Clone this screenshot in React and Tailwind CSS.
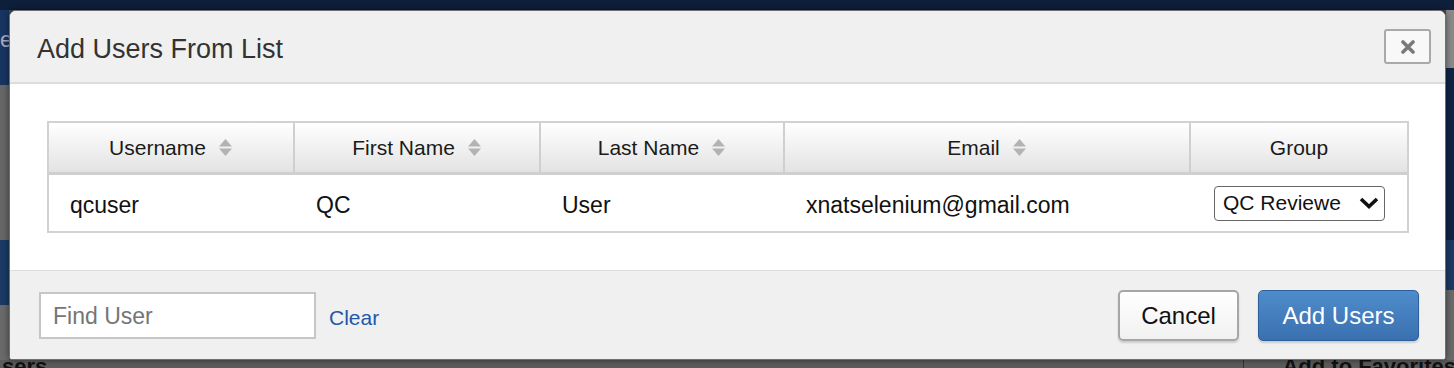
import React from "react";

function SortIcon() {
  return (
    <svg width="15" height="19" viewBox="0 0 15 19" className="ml-3 shrink-0">
      <path d="M7.5 1 L14 8.5 L1 8.5 Z" fill="#b3b3b3" />
      <path d="M7.5 18 L14 10.5 L1 10.5 Z" fill="#b3b3b3" />
    </svg>
  );
}

const columns = [
  { label: "Username", w: "w-[246px]", sort: true },
  { label: "First Name", w: "w-[246px]", sort: true },
  { label: "Last Name", w: "w-[244px]", sort: true },
  { label: "Email", w: "w-[406px]", sort: true },
  { label: "Group", w: "flex-1", sort: false },
];

const row = ["qcuser", "QC", "User", "xnatselenium@gmail.com"];

function Backdrop() {
  return (
    <div className="flex h-full w-full flex-col">
      <div className="h-[10px] bg-[#0d1f3b]" />
      <div className="flex flex-1">
        <div className="flex w-[9px] flex-col">
          <div className="h-[75px] bg-[#173561] text-[22px] leading-[60px] text-[#aab] overflow-hidden">e</div>
          <div className="h-[155px] bg-[#666]" />
          <div className="h-[65px] bg-[#1b3a64]" />
          <div className="flex-1 bg-[#6a6a6a]" />
        </div>
        <div className="flex-1" />
        <div className="flex w-[8px] flex-col">
          <div className="h-[58px] bg-[#8a8a8a]" />
          <div className="h-[172px] bg-[#0f2446]" />
          <div className="h-[50px] bg-[#1b3a64]" />
          <div className="flex-1 bg-[#6a6a6a]" />
        </div>
      </div>
      <div className="flex h-[8px] items-start overflow-hidden bg-[#5c5c5c] text-[22px] font-bold leading-[14px] text-[#111]">
        <span className="ml-[2px]">sers</span>
        <span className="ml-auto mr-[-2px] border-l border-[#333] pl-[38px]">Add to Favorites</span>
      </div>
    </div>
  );
}

export default function App() {
  return (
    <div
      className="relative h-[368px] w-[1454px] overflow-hidden bg-[#4a4a4a]"
      style={{ fontFamily: '"Liberation Sans", Arial, sans-serif' }}
    >
      <Backdrop />
      <div className="absolute left-[9px] top-[10px] flex h-[350px] w-[1437px] flex-col overflow-hidden rounded-t-[7px] rounded-b-[3px] border border-[#6f6f6f] bg-white shadow-[0_0_6px_rgba(0,0,0,0.5)]">
        {/* header */}
        <div className="flex h-[73px] shrink-0 items-center justify-between border-b-2 border-[#dcdcdc] bg-[#f0f0f0] pl-[27px] pr-[14px]">
          <h2 className="pt-[5px] text-[27px] font-normal text-[#333]">Add Users From List</h2>
          <button className="flex h-[35px] w-[47px] items-center justify-center rounded-[3px] border-2 border-[#a9a9a9] bg-[#f8f8f8]">
            <svg width="14" height="14" viewBox="0 0 14 14">
              <path d="M2 2 L12 12 M12 2 L2 12" stroke="#7a7a7a" strokeWidth="3.6" strokeLinecap="round" />
            </svg>
          </button>
        </div>

        {/* body */}
        <div className="flex-1 bg-white pl-[37px] pr-[36px] pt-[37px]">
          <div className="border-2 border-[#d2d2d2]">
            <div className="flex h-[52px] border-b-[3px] border-[#cfcfcf] bg-gradient-to-b from-white to-[#e3e3e3]">
              {columns.map((c, i) => (
                <div
                  key={c.label}
                  className={`${c.w} flex items-center justify-center text-[21px] text-[#1a1a1a] ${
                    i < columns.length - 1 ? "border-r-2 border-[#cfcfcf]" : ""
                  }`}
                >
                  <span>{c.label}</span>
                  {c.sort && <SortIcon />}
                </div>
              ))}
            </div>
            <div className="flex h-[56px] items-center text-[23px] text-[#111]">
              {row.map((v, i) => (
                <div key={i} className={`${columns[i].w} pl-[21px] pt-[5px]`}>
                  {v}
                </div>
              ))}
              <div className="flex-1 pl-[23px]">
                <div className="flex h-[35px] w-[171px] items-center justify-between overflow-hidden rounded-[4px] border border-[#666] bg-white pl-[8px] pr-[4px] text-[21px] text-[#111]">
                  <span className="w-[118px] shrink-0 overflow-hidden whitespace-nowrap">QC Reviewer</span>
                  <svg width="22" height="14" viewBox="0 0 22 14">
                    <path d="M3 3 L11 10.5 L19 3" fill="none" stroke="#111" strokeWidth="3.6" />
                  </svg>
                </div>
              </div>
            </div>
          </div>
        </div>

        {/* footer */}
        <div className="flex h-[89px] shrink-0 items-center border-t border-[#dddddd] bg-[#f0f0f0] pl-[29px] pr-[26px]">
          <div className="flex h-[47px] w-[277px] items-center border-2 border-[#c6c6c6] bg-white pl-[12px] pt-[2px] text-[23px] text-[#757575]">
            Find User
          </div>
          <a className="ml-[13px] mt-[6px] text-[21px] text-[#2357a8]">Clear</a>
          <div className="ml-auto flex gap-[19px]">
            <button className="flex h-[51px] w-[121px] items-center justify-center rounded-[5px] border-2 border-[#a6a6a6] bg-gradient-to-b from-white to-[#f1f1f1] pt-[2px] text-[24px] text-[#111] shadow-[0_2px_2px_rgba(0,0,0,0.15)]">
              Cancel
            </button>
            <button className="flex h-[51px] w-[161px] items-center justify-center rounded-[5px] border border-[#2d5f9c] bg-gradient-to-b from-[#4f8ccb] to-[#3a70b0] pt-[2px] text-[24px] text-white shadow-[0_2px_2px_rgba(0,0,0,0.15)]">
              Add Users
            </button>
          </div>
        </div>
      </div>
    </div>
  );
}
